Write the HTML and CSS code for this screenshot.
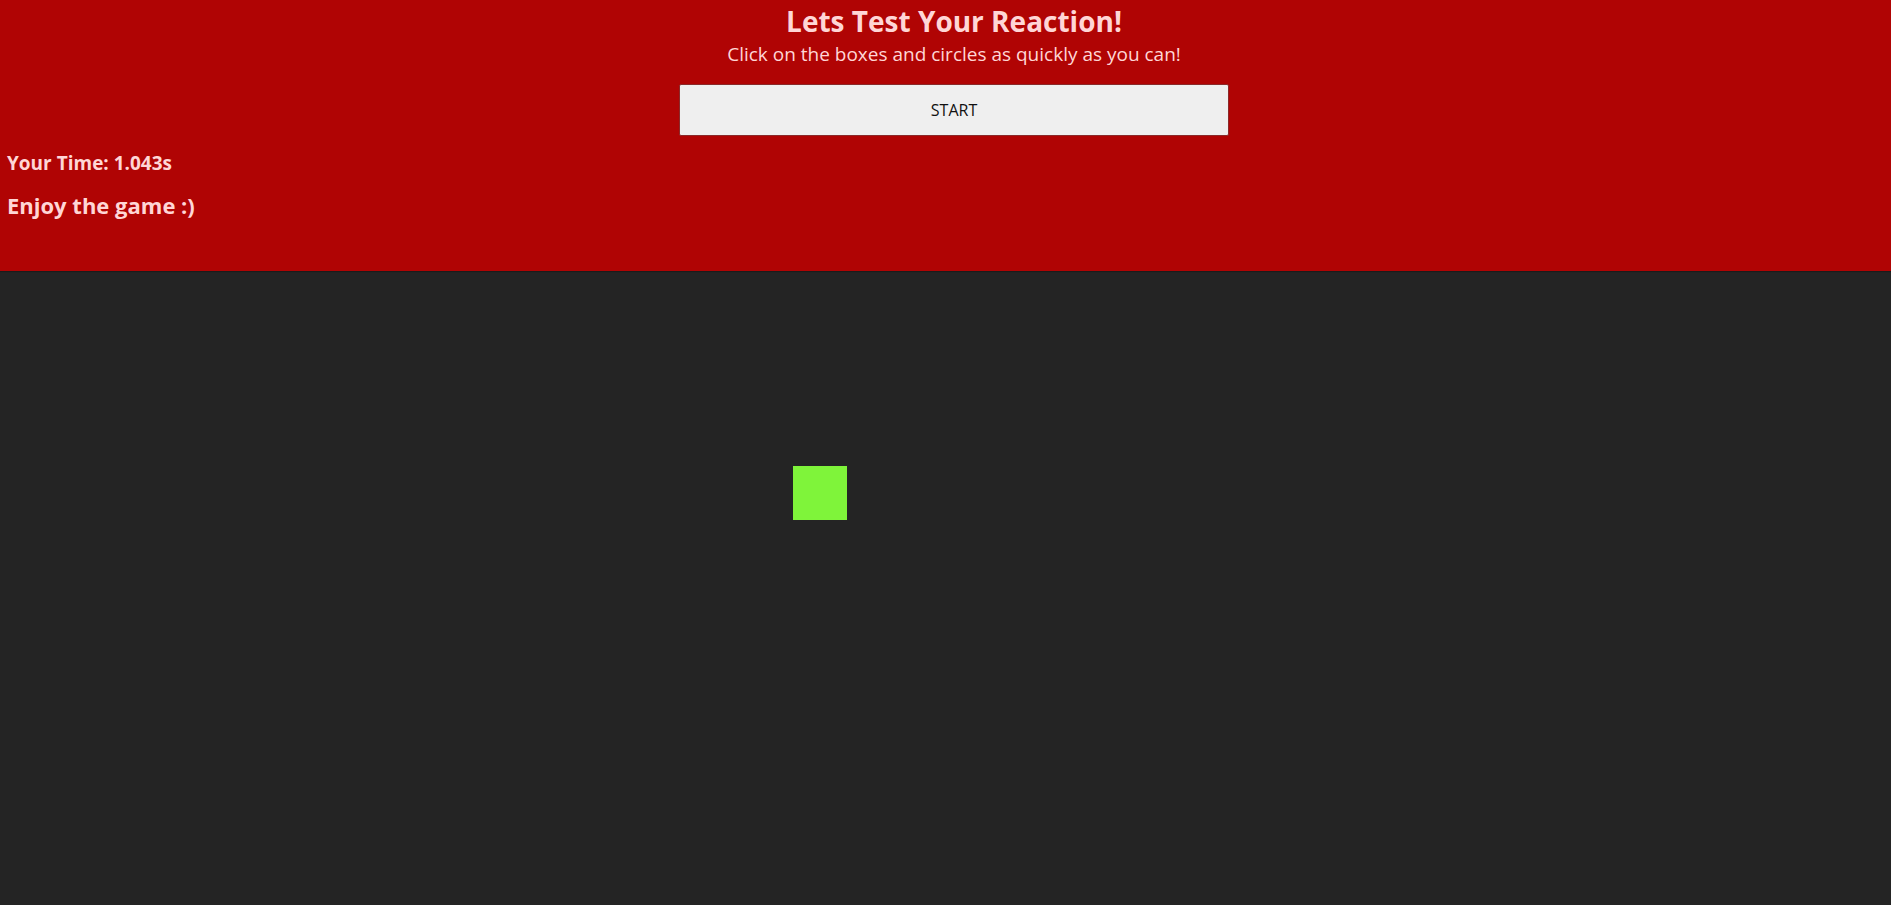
FILE: index.html
```html
<!DOCTYPE html>
<html lang="en">
<head>
<meta charset="utf-8">
<title>Reaction Test</title>
<link rel="stylesheet" href="styles.css">
</head>
<body>
  <header class="header">
    <div class="intro">
      <h1 class="title">Lets Test Your Reaction!</h1>
      <p class="subtitle">Click on the boxes and circles as quickly as you can!</p>
      <button class="start-btn" type="button">START</button>
    </div>
    <p class="time">Your Time: 1.043s</p>
    <p class="message">Enjoy the game :)</p>
  </header>
  <main class="game">
    <div class="target" style="left: 793px; top: 195px;"></div>
  </main>
</body>
</html>
```

FILE: styles.css
```css
html, body {
  margin: 0;
  padding: 0;
  height: 100%;
}

body {
  background: #242424;
  font-family: "Open Sans", "Noto Sans", "Liberation Sans", sans-serif;
  color: #ffd6d6;
  display: flex;
  flex-direction: column;
}

.header {
  background: #b00404;
  padding: 3px 0 52px 7px;
  box-shadow: 0 1px 1px rgba(0, 0, 0, 0.25);
}

.intro {
  display: flex;
  flex-direction: column;
  align-items: center;
  padding-left: 10px;
}

.title {
  margin: 0;
  font-size: 28px;
  line-height: 36px;
  font-weight: 700;
}

.subtitle {
  margin: 1px 0 0;
  font-size: 19px;
  line-height: 28px;
}

.start-btn {
  margin-top: 16px;
  width: 550px;
  height: 52px;
  background: #efefef;
  border: 1px solid #8a2a2a;
  border-radius: 2px;
  font-family: inherit;
  font-size: 16px;
  color: #111;
  cursor: pointer;
}

.time {
  margin: 15px 0 0;
  font-size: 19px;
  line-height: 24px;
  font-weight: 700;
}

.message {
  margin: 16px 0 0;
  font-size: 22px;
  line-height: 28px;
  font-weight: 700;
}

.game {
  position: relative;
  flex: 1;
}

.target {
  position: absolute;
  width: 54px;
  height: 54px;
  background: #7ff43a;
}
```
